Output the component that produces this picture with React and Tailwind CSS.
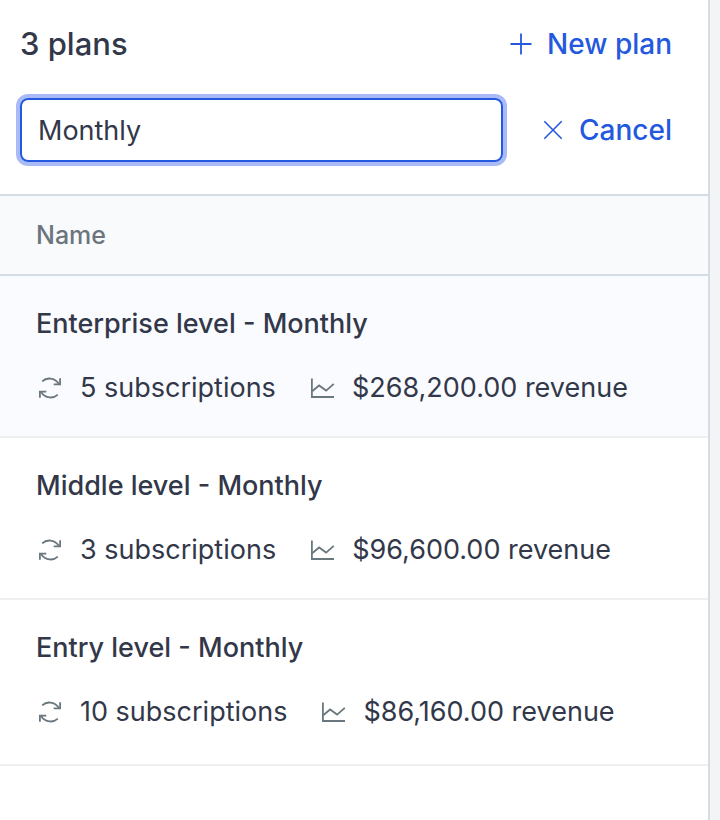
import { useState } from 'react';

const plans = [
    { id: 1, name: 'Enterprise level - Monthly', subscriptions: 5, revenue: '$268,200.00' },
    { id: 2, name: 'Middle level - Monthly', subscriptions: 3, revenue: '$96,600.00' },
    { id: 3, name: 'Entry level - Monthly', subscriptions: 10, revenue: '$86,160.00' }
];

const PlusIcon = () => (
    <svg className="size-6" viewBox="0 0 24 24" fill="none" stroke="currentColor" strokeWidth="1.8" aria-hidden="true">
        <path d="M12 1.5v21M1.5 12h21" />
    </svg>
);

const CloseIcon = () => (
    <svg className="size-6" viewBox="0 0 24 24" fill="none" stroke="currentColor" strokeWidth="1.6" aria-hidden="true">
        <path d="M3.3 3.3l17.4 17.4M20.7 3.3L3.3 20.7" />
    </svg>
);

const RefreshIcon = () => (
    <svg className="size-7 text-[#6b777e]" viewBox="0 0 28 28" fill="none" stroke="currentColor" strokeWidth="1.8" aria-hidden="true">
        <path d="M6.2 7.3C10.5 3.2 18.5 3.2 23 10" />
        <path d="M24.1 4.3v6.1h-6.4" />
        <path d="M21.8 20.7C17.5 24.8 9.5 24.8 5 18" />
        <path d="M3.9 23.7v-6.1h6.4" />
    </svg>
);

const ChartIcon = () => (
    <svg className="size-7 text-[#6b777e]" viewBox="0 0 28 28" fill="none" stroke="currentColor" strokeWidth="1.8" aria-hidden="true">
        <path d="M3.9 4.5V23H26" />
        <path d="M4.2 17.3l6.9-5.8 7 5.1 7.7-6.8" />
    </svg>
);

const PlanRow = ({ plan }) => (
    <tr className="group border-b-2 border-[#eeeff1] first:bg-[#fafbff]">
        <td className="px-9 py-7 group-last:pb-8">
            <div className="text-[27px] leading-10 font-medium">{plan.name}</div>
            <div className="mt-6 flex items-center text-[27px] leading-10">
                <RefreshIcon />
                <span className="ml-4">{plan.subscriptions} subscriptions</span>
                <span className="ml-8 flex items-center gap-4">
                    <ChartIcon />
                    {plan.revenue} revenue
                </span>
            </div>
        </td>
    </tr>
);

const App = () => {
    const [query, setQuery] = useState('Monthly');

    return (
        <div className="min-h-screen flex bg-[#f3f4f6] font-['Inter',sans-serif] text-[#323849]">
            <main className="flex-1 mr-[10px] bg-white border-r-2 border-[#d6dce4]">
                <div className="px-5 pt-6 pb-8">
                    <div className="flex items-center justify-between pr-4">
                        <h1 className="text-[31px] leading-10 font-medium">3 plans</h1>
                        <button type="button" className="flex items-center gap-3.5 text-[28px] leading-10 font-medium text-[#2459df]">
                            <PlusIcon />
                            New plan
                        </button>
                    </div>
                    <div className="mt-[34px] flex items-center pr-4">
                        <input
                            type="text"
                            aria-label="Search plans"
                            value={query}
                            onChange={(e) => setQuery(e.target.value)}
                            className="h-16 min-w-0 flex-1 px-4 rounded-lg border-2 border-[#2459df] ring-4 ring-[#a8bbf6] text-[27px] outline-none"
                        />
                        <button
                            type="button"
                            onClick={() => setQuery('')}
                            className="ml-[38px] flex items-center gap-3.5 text-[28px] leading-10 font-medium text-[#2459df]"
                        >
                            <CloseIcon />
                            Cancel
                        </button>
                    </div>
                </div>

                <table className="w-full border-collapse">
                    <thead>
                        <tr className="border-y-2 border-[#d6dce4] bg-[#f9fafc]">
                            <th scope="col" className="px-9 py-[19px] text-left text-[25px] leading-10 font-medium text-[#6b757d]">
                                Name
                            </th>
                        </tr>
                    </thead>
                    <tbody>
                        {plans.map((plan) => (
                            <PlanRow key={plan.id} plan={plan} />
                        ))}
                    </tbody>
                </table>
            </main>
        </div>
    );
};

export default App;
